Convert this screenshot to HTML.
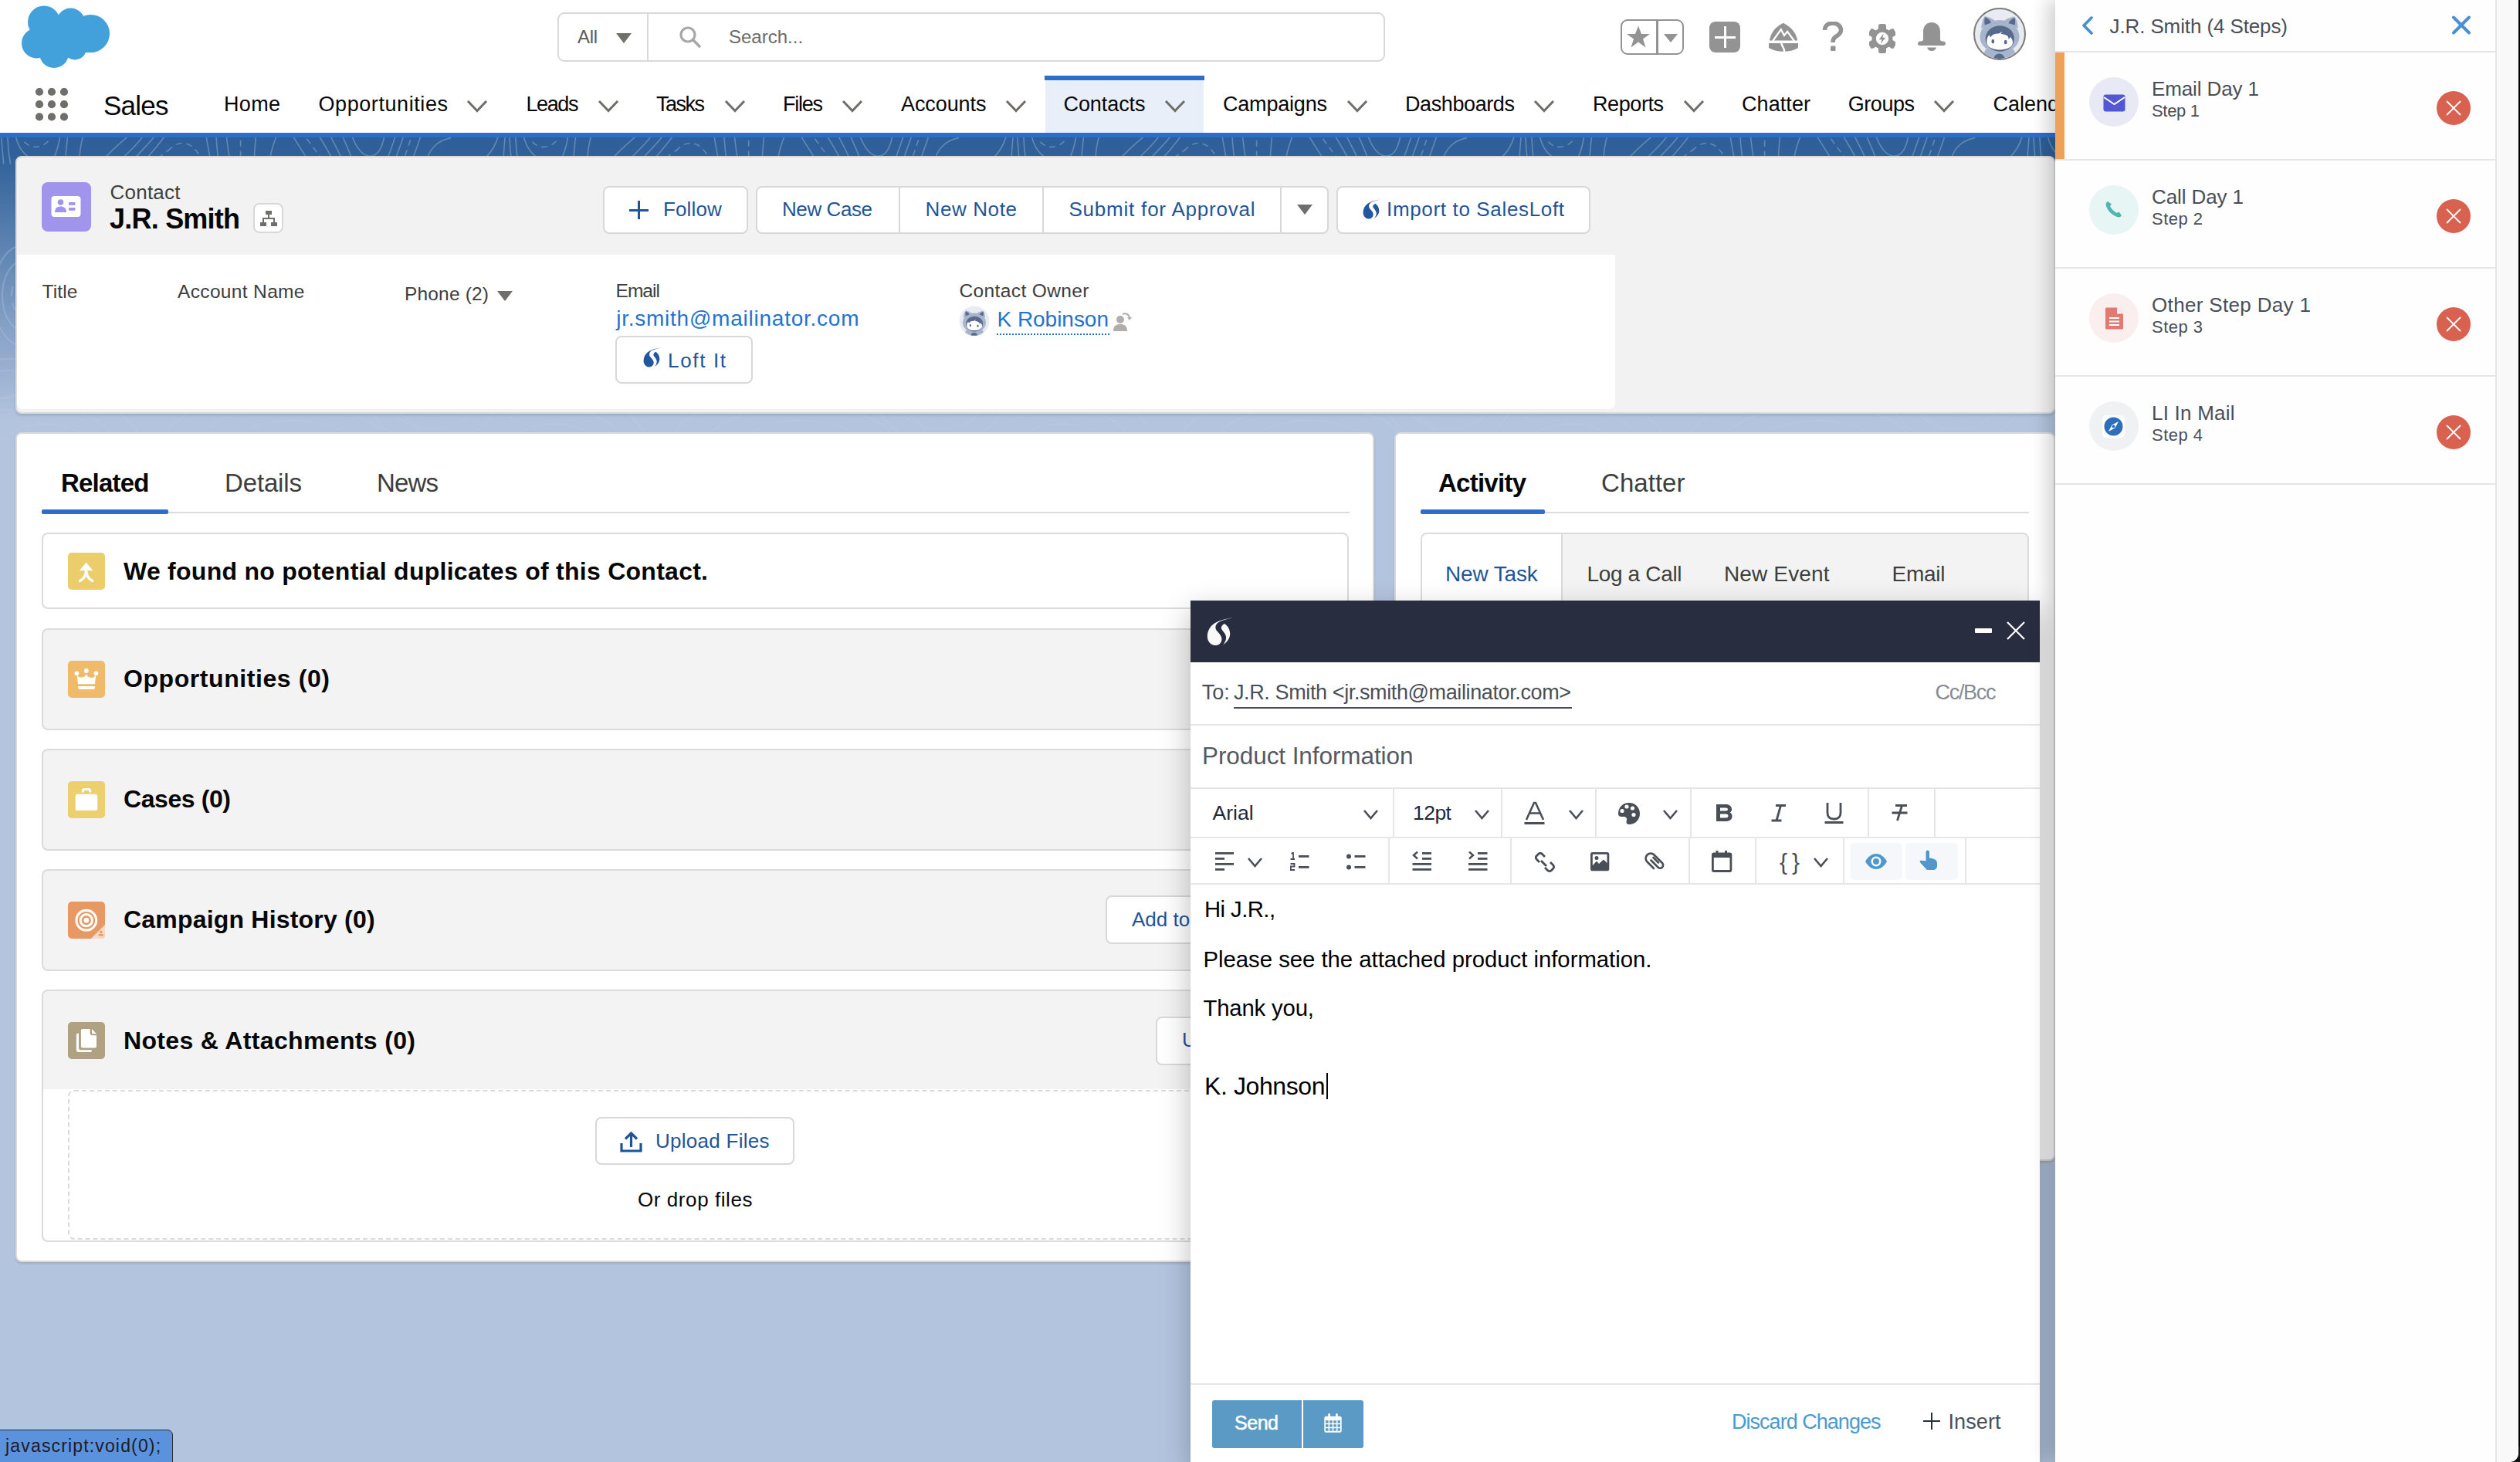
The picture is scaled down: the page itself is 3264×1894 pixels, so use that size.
<!DOCTYPE html>
<html><head><meta charset="utf-8"><title>Contact J.R. Smith</title>
<style>
*{margin:0;padding:0;box-sizing:border-box}
html,body{width:3264px;height:1894px;overflow:hidden;background:#b3c4de;font-family:"Liberation Sans",sans-serif}
body>div,body>svg{position:absolute}
.t{white-space:nowrap}
</style></head>
<body>
<div style="left:0px;top:178px;width:3264px;height:520px;background:linear-gradient(to bottom,#2e5f98 0px,#2f6099 20px,#b3c4de 368px)"></div>
<svg style="left:0;top:178px;opacity:.25" width="2662" height="420" viewBox="0 0 2662 420"><defs><pattern id="topo" x="0" y="0" width="658" height="600" patternUnits="userSpaceOnUse"><g transform="scale(0.26190) translate(0,-7.6)"><path d="M5,-30 C8,30 12,80 18,140" fill="none" stroke="#ffffff" stroke-width="6.2"/><path d="M38,-30 C36,40 42,90 52,140" fill="none" stroke="#ffffff" stroke-width="6.2"/><path d="M72,-30 C80,40 110,95 170,120" fill="none" stroke="#ffffff" stroke-width="6.2"/><path d="M120,30 C150,60 200,70 245,20" fill="none" stroke="#ffffff" stroke-width="6.2" stroke-dasharray="30 22"/><path d="M300,-30 C295,40 280,90 250,140" fill="none" stroke="#ffffff" stroke-width="6.2"/><path d="M338,-30 C330,40 325,90 322,140" fill="none" stroke="#ffffff" stroke-width="6.2"/><path d="M420,-30 C400,30 392,80 392,140" fill="none" stroke="#ffffff" stroke-width="6.2"/><path d="M500,130 C560,60 600,30 660,-20" fill="none" stroke="#ffffff" stroke-width="6.2"/><path d="M590,130 C640,70 690,40 720,-20" fill="none" stroke="#ffffff" stroke-width="6.2"/><path d="M650,130 C700,70 740,40 780,-20" fill="none" stroke="#ffffff" stroke-width="6.2"/><path d="M710,130 C760,70 790,40 830,-20" fill="none" stroke="#ffffff" stroke-width="6.2"/><path d="M780,110 C800,95 820,80 840,65" fill="none" stroke="#ffffff" stroke-width="6.2" stroke-dasharray="30 22"/><path d="M830,75 C880,20 940,20 985,95" fill="none" stroke="#ffffff" stroke-width="6.2" stroke-dasharray="30 22"/><path d="M1015,-30 C1025,40 1035,90 1045,140" fill="none" stroke="#ffffff" stroke-width="6.2"/><path d="M1068,-30 C1070,40 1075,90 1085,140" fill="none" stroke="#ffffff" stroke-width="6.2"/><path d="M1118,-30 C1122,40 1130,90 1142,140" fill="none" stroke="#ffffff" stroke-width="6.2"/><path d="M1190,-30 L1190,140" fill="none" stroke="#ffffff" stroke-width="6.2" stroke-dasharray="30 22"/><path d="M1268,-30 C1262,40 1258,90 1256,140" fill="none" stroke="#ffffff" stroke-width="6.2"/><path d="M1380,-30 C1350,40 1335,90 1332,140" fill="none" stroke="#ffffff" stroke-width="6.2"/><path d="M1430,-30 C1470,40 1500,80 1535,140" fill="none" stroke="#ffffff" stroke-width="6.2"/><path d="M1490,-30 C1530,40 1570,80 1610,140" fill="none" stroke="#ffffff" stroke-width="6.2" stroke-dasharray="30 22"/><path d="M1560,-30 C1600,40 1630,80 1655,140" fill="none" stroke="#ffffff" stroke-width="6.2"/><path d="M1620,-30 C1650,40 1680,80 1700,140" fill="none" stroke="#ffffff" stroke-width="6.2"/><path d="M1680,-30 C1710,40 1730,80 1750,140" fill="none" stroke="#ffffff" stroke-width="6.2"/><path d="M1730,-30 C1760,70 1800,100 1830,100 C1870,100 1895,60 1905,-30" fill="none" stroke="#ffffff" stroke-width="6.2"/><path d="M1965,-30 C1945,40 1925,90 1905,140" fill="none" stroke="#ffffff" stroke-width="6.2"/><path d="M2005,-30 C1985,40 1965,90 1945,140" fill="none" stroke="#ffffff" stroke-width="6.2"/><path d="M2045,-30 C2025,40 2005,90 1990,140" fill="none" stroke="#ffffff" stroke-width="6.2" stroke-dasharray="30 22"/><path d="M2090,-30 C2070,40 2050,90 2030,140" fill="none" stroke="#ffffff" stroke-width="6.2"/><path d="M2230,10 C2170,20 2120,60 2105,140" fill="none" stroke="#ffffff" stroke-width="6.2"/><path d="M2470,-30 C2460,40 2430,80 2390,120" fill="none" stroke="#ffffff" stroke-width="6.2"/><path d="M2500,-30 C2495,40 2490,90 2488,140" fill="none" stroke="#ffffff" stroke-width="6.2"/></g><ellipse cx="60" cy="420" rx="40" ry="28" fill="none" stroke="#ffffff" stroke-width="2"/><ellipse cx="60" cy="420" rx="70" ry="49" fill="none" stroke="#ffffff" stroke-width="2"/><ellipse cx="60" cy="420" rx="100" ry="70" fill="none" stroke="#ffffff" stroke-width="2"/><ellipse cx="60" cy="420" rx="130" ry="91" fill="none" stroke="#ffffff" stroke-width="2"/><ellipse cx="380" cy="400" rx="78" ry="33" fill="none" stroke="#ffffff" stroke-width="2"/><ellipse cx="380" cy="400" rx="124" ry="52" fill="none" stroke="#ffffff" stroke-width="2"/><ellipse cx="380" cy="400" rx="169" ry="72" fill="none" stroke="#ffffff" stroke-width="2"/><ellipse cx="30" cy="205" rx="15" ry="25" fill="none" stroke="#ffffff" stroke-width="2" stroke-dasharray="12 9"/><ellipse cx="30" cy="205" rx="27" ry="45" fill="none" stroke="#ffffff" stroke-width="2"/><ellipse cx="30" cy="205" rx="39" ry="65" fill="none" stroke="#ffffff" stroke-width="2"/><ellipse cx="10" cy="320" rx="30" ry="18" fill="none" stroke="#ffffff" stroke-width="2"/><ellipse cx="10" cy="320" rx="55" ry="33" fill="none" stroke="#ffffff" stroke-width="2"/><ellipse cx="560" cy="330" rx="35" ry="28" fill="none" stroke="#ffffff" stroke-width="2"/><ellipse cx="560" cy="330" rx="60" ry="48" fill="none" stroke="#ffffff" stroke-width="2"/><ellipse cx="560" cy="330" rx="85" ry="68" fill="none" stroke="#ffffff" stroke-width="2"/></pattern><linearGradient id="tfade" x1="0" y1="0" x2="0" y2="1"><stop offset="0" stop-color="#fff"/><stop offset=".55" stop-color="#fff" stop-opacity=".6"/><stop offset="1" stop-color="#fff" stop-opacity="0"/></linearGradient><mask id="tmask"><rect width="2662" height="420" fill="url(#tfade)"/></mask></defs><rect width="2662" height="420" fill="url(#topo)" mask="url(#tmask)"/></svg>
<div style="left:0px;top:0px;width:3264px;height:172px;background:#fff"></div>
<div style="left:0px;top:172px;width:3264px;height:6px;background:#2b6fcc"></div>
<svg style="left:26px;top:6px;" width="120" height="86" viewBox="0 0 120 86"><g fill="#42a0da"><circle cx="31" cy="22.5" r="21"/><circle cx="65.5" cy="23" r="18.5"/><circle cx="91.5" cy="37.5" r="24.5"/><circle cx="21.5" cy="50" r="19.5"/><circle cx="44" cy="63" r="19"/><circle cx="71" cy="56.5" r="15"/><rect x="22" y="26" width="74" height="36"/></g></svg>
<div style="left:722px;top:16px;width:1072px;height:64px;border:2px solid #d9d9d9;border-radius:9px;background:#fff"></div>
<div style="left:838px;top:18px;width:2px;height:60px;background:#d9d9d9"></div>
<div class="t" style="left:748.00px;top:35.68px;font-size:24px;line-height:24px;color:#5c5c5c;letter-spacing:-0.350px;">All</div>
<svg style="left:798px;top:43px;" width="20" height="13" viewBox="0 0 20 13"><polygon points="0,0 20,0 10.0,13" fill="#706e6b"/></svg>
<svg style="left:878px;top:32px;" width="32" height="32" viewBox="0 0 32 32"><circle cx="13" cy="13" r="9" fill="none" stroke="#a8a8a8" stroke-width="3.2"/><line x1="19.5" y1="19.5" x2="28" y2="28" stroke="#a8a8a8" stroke-width="3.6" stroke-linecap="round"/></svg>
<div class="t" style="left:944.00px;top:35.68px;font-size:24px;line-height:24px;color:#6b6b6b;">Search...</div>
<div style="left:2099px;top:25px;width:82px;height:46px;border:2.5px solid #939393;border-radius:9px"></div>
<div style="left:2145px;top:26px;width:2.5px;height:44px;background:#939393"></div>
<svg style="left:2106px;top:32px;" width="32" height="32" viewBox="0 0 32 32"><polygon fill="#939393" points="16,1.5 20,12 31,12 22,18.5 25.5,29.5 16,22.5 6.5,29.5 10,18.5 1,12 12,12"/></svg>
<svg style="left:2155px;top:44px;" width="18" height="11" viewBox="0 0 18 11"><polygon points="0,0 18,0 9.0,11" fill="#939393"/></svg>
<div style="left:2214px;top:28px;width:40px;height:40px;background:#939393;border-radius:8px"></div>
<div style="left:2221px;top:46.5px;width:27px;height:3.5px;background:#fff"></div>
<div style="left:2232.8px;top:34px;width:3.5px;height:28px;background:#fff"></div>
<svg style="left:2290px;top:29px;" width="40" height="40" viewBox="0 0 40 40"><path fill="#939393" d="M19.8,0.8 C28,5 36,12 38.2,23.4 L1.9,23.4 C4,12 11,5 19.8,0.8 Z"/><path fill="#939393" d="M1,27 L39,27 L39,33 C33,36.5 27,37.7 20,37.7 C13,37.7 7,36.5 1,33 Z"/><polyline points="6.2,24 16.8,9.2 21,17 25,11.8 34,24" fill="none" stroke="#fff" stroke-width="2.3"/><path d="M17.6,26 C16.3,30 21.8,32.5 21.3,38.5" fill="none" stroke="#fff" stroke-width="2.4"/></svg>
<svg style="left:2360px;top:28px;" width="30" height="40" viewBox="0 0 30 40"><path d="M3.5,11 C3.5,5 8.5,2 14,2 C20,2 24.5,6 24.5,11 C24.5,16 20.5,17.5 17,20 C15,21.5 14,23 14,27" fill="none" stroke="#939393" stroke-width="5.5"/><rect x="11" y="31.5" width="6.5" height="6.5" rx="1" fill="#939393"/></svg>
<svg style="left:2421px;top:31px;" width="34" height="38" viewBox="0 0 34 38"><g fill="#939393"><rect x="12" y="0" width="10" height="9" rx="2.5" transform="rotate(0 17 19)"/><rect x="12" y="0" width="10" height="9" rx="2.5" transform="rotate(60 17 19)"/><rect x="12" y="0" width="10" height="9" rx="2.5" transform="rotate(120 17 19)"/><rect x="12" y="0" width="10" height="9" rx="2.5" transform="rotate(180 17 19)"/><rect x="12" y="0" width="10" height="9" rx="2.5" transform="rotate(240 17 19)"/><rect x="12" y="0" width="10" height="9" rx="2.5" transform="rotate(300 17 19)"/><circle cx="17" cy="19" r="13.5"/></g><circle cx="17" cy="19" r="8.2" fill="#fff"/><polygon fill="#939393" points="18.8,12.2 12.8,20.2 16.6,20.2 14.8,26 21.2,17.8 17.4,17.8"/></svg>
<svg style="left:2482px;top:29px;" width="40" height="40" viewBox="0 0 40 40"><path fill="#939393" d="M20,0 C27,0 31,5 31,12 L31,22 C31,24 32.5,24.5 35,24.5 C37,24.5 38,26 38,27.5 C38,29 37,30 35.5,30 L4.5,30 C3,30 2,29 2,27.5 C2,26 3,24.5 5,24.5 C7.5,24.5 9,24 9,22 L9,12 C9,5 13,0 20,0 Z"/><path fill="#939393" d="M14,32.5 L26,32.5 C25,35.5 23,37 20,37 C17,37 15,35.5 14,32.5 Z"/></svg>
<svg style="left:2556px;top:10px;" width="68" height="68" viewBox="0 0 68 68"><circle cx="34" cy="34" r="33" fill="#e8ebf0" stroke="#7b7b7b" stroke-width="2"/><clipPath id="avc"><circle cx="34" cy="34" r="32"/></clipPath><g clip-path="url(#avc)"><path d="M8,70 L16,54 L52,54 L60,70 Z" fill="#a6b4cc"/><ellipse cx="34" cy="37.5" rx="25.5" ry="21.5" fill="#a6b4cc"/><path d="M10,27 C11,19 12,14 15,11 C20,12 25,14 28,17 Z M58,27 C57,19 56,14 53,11.5 C48,12.5 43,14 40,17 Z" fill="#a6b4cc"/><path d="M14.8,22.5 C14,17 14.3,14 15.3,12.2 C18.5,13.5 21.5,16 23,19.5 Z M53.7,22.5 C54.5,17.5 54.2,14.5 53.2,13 C50,14.3 47,16.5 45.5,20 Z" fill="#586b8c"/><ellipse cx="34.3" cy="40" rx="18.6" ry="16.8" fill="#586b8c"/><path d="M17.5,45 C17.2,40 18.5,37 20.5,35.5 L22.5,38.5 C24,34.5 28,33.5 33,33.5 L37.5,31 L35.5,34 C39.5,34 43,35.5 45,37.5 L45.8,41 L47.8,38 C49.8,40 51,42 51,45 C50.5,51 43.5,54.5 34.2,54.5 C25,54.5 17.8,51 17.5,45 Z" fill="#fff"/><ellipse cx="25.3" cy="43.5" rx="1.9" ry="2.7" fill="#586b8c"/><ellipse cx="41.7" cy="44.5" rx="1.9" ry="2.7" fill="#586b8c"/><circle cx="33.5" cy="66.5" r="7" fill="#586b8c"/></g></svg>
<svg style="left:46px;top:113.5px;" width="43" height="43" viewBox="0 0 43 43"><g fill="#706e6b"><circle cx="5" cy="5.0" r="5.1"/><circle cx="5" cy="21.2" r="5.1"/><circle cx="5" cy="37.4" r="5.1"/><circle cx="21" cy="5.0" r="5.1"/><circle cx="21" cy="21.2" r="5.1"/><circle cx="21" cy="37.4" r="5.1"/><circle cx="37" cy="5.0" r="5.1"/><circle cx="37" cy="21.2" r="5.1"/><circle cx="37" cy="37.4" r="5.1"/></g></svg>
<div class="t" style="left:134.00px;top:118.97px;font-size:35px;line-height:35px;color:#080707;letter-spacing:-0.775px;">Sales</div>
<div style="left:1353px;top:98px;width:207px;height:6px;background:#2b6fcc"></div>
<div style="left:1354px;top:104px;width:205px;height:68px;background:#e8eff9"></div>
<div class="t" style="left:290.00px;top:121.64px;font-size:27px;line-height:27px;color:#080707;letter-spacing:0.333px;">Home</div>
<div class="t" style="left:412.50px;top:121.64px;font-size:27px;line-height:27px;color:#080707;letter-spacing:0.575px;">Opportunities</div>
<svg style="left:603px;top:128px;" width="30" height="18.5" viewBox="0 0 30 18.5"><polyline points="3,3 15.0,15.5 27,3" fill="none" stroke="#706e6b" stroke-width="3" stroke-linecap="butt" stroke-linejoin="miter"/></svg>
<div class="t" style="left:681.50px;top:121.64px;font-size:27px;line-height:27px;color:#080707;letter-spacing:-1.400px;">Leads</div>
<svg style="left:772.5px;top:128px;" width="30.0" height="18.5" viewBox="0 0 30.0 18.5"><polyline points="3,3 15.0,15.5 27.0,3" fill="none" stroke="#706e6b" stroke-width="3" stroke-linecap="butt" stroke-linejoin="miter"/></svg>
<div class="t" style="left:850.00px;top:121.64px;font-size:27px;line-height:27px;color:#080707;letter-spacing:-1.500px;">Tasks</div>
<svg style="left:937px;top:128px;" width="30" height="18.5" viewBox="0 0 30 18.5"><polyline points="3,3 15.0,15.5 27,3" fill="none" stroke="#706e6b" stroke-width="3" stroke-linecap="butt" stroke-linejoin="miter"/></svg>
<div class="t" style="left:1014.00px;top:121.64px;font-size:27px;line-height:27px;color:#080707;letter-spacing:-1.250px;">Files</div>
<svg style="left:1089px;top:128px;" width="30" height="18.5" viewBox="0 0 30 18.5"><polyline points="3,3 15.0,15.5 27,3" fill="none" stroke="#706e6b" stroke-width="3" stroke-linecap="butt" stroke-linejoin="miter"/></svg>
<div class="t" style="left:1167.00px;top:121.64px;font-size:27px;line-height:27px;color:#080707;letter-spacing:-0.086px;">Accounts</div>
<svg style="left:1301px;top:128px;" width="30" height="18.5" viewBox="0 0 30 18.5"><polyline points="3,3 15.0,15.5 27,3" fill="none" stroke="#706e6b" stroke-width="3" stroke-linecap="butt" stroke-linejoin="miter"/></svg>
<div class="t" style="left:1377.50px;top:121.64px;font-size:27px;line-height:27px;color:#080707;letter-spacing:-0.071px;">Contacts</div>
<svg style="left:1507px;top:128px;" width="30" height="18.5" viewBox="0 0 30 18.5"><polyline points="3,3 15.0,15.5 27,3" fill="none" stroke="#706e6b" stroke-width="3" stroke-linecap="butt" stroke-linejoin="miter"/></svg>
<div class="t" style="left:1584.00px;top:121.64px;font-size:27px;line-height:27px;color:#080707;letter-spacing:-0.200px;">Campaigns</div>
<svg style="left:1743px;top:128px;" width="30" height="18.5" viewBox="0 0 30 18.5"><polyline points="3,3 15.0,15.5 27,3" fill="none" stroke="#706e6b" stroke-width="3" stroke-linecap="butt" stroke-linejoin="miter"/></svg>
<div class="t" style="left:1820.00px;top:121.64px;font-size:27px;line-height:27px;color:#080707;letter-spacing:-0.400px;">Dashboards</div>
<svg style="left:1985px;top:128px;" width="30" height="18.5" viewBox="0 0 30 18.5"><polyline points="3,3 15.0,15.5 27,3" fill="none" stroke="#706e6b" stroke-width="3" stroke-linecap="butt" stroke-linejoin="miter"/></svg>
<div class="t" style="left:2063.00px;top:121.64px;font-size:27px;line-height:27px;color:#080707;letter-spacing:-0.417px;">Reports</div>
<svg style="left:2179px;top:128px;" width="30" height="18.5" viewBox="0 0 30 18.5"><polyline points="3,3 15.0,15.5 27,3" fill="none" stroke="#706e6b" stroke-width="3" stroke-linecap="butt" stroke-linejoin="miter"/></svg>
<div class="t" style="left:2256.00px;top:121.64px;font-size:27px;line-height:27px;color:#080707;letter-spacing:0.083px;">Chatter</div>
<div class="t" style="left:2393.70px;top:121.64px;font-size:27px;line-height:27px;color:#080707;letter-spacing:-0.440px;">Groups</div>
<svg style="left:2503px;top:128px;" width="30" height="18.5" viewBox="0 0 30 18.5"><polyline points="3,3 15.0,15.5 27,3" fill="none" stroke="#706e6b" stroke-width="3" stroke-linecap="butt" stroke-linejoin="miter"/></svg>
<div class="t" style="left:2581.50px;top:121.64px;font-size:27px;line-height:27px;color:#080707;">Calendar</div>
<div style="left:20px;top:202px;width:2642px;height:334px;background:#f2f2f2;border:2px solid #dddbda;border-radius:8px;box-shadow:0 2px 3px rgba(0,0,0,.12)"></div>
<div style="left:22px;top:330px;width:2070px;height:200px;background:#fff;border-radius:0 0 8px 8px"></div>
<div style="left:54px;top:236px;width:64px;height:64px;background:#a094ed;border-radius:8px"></div>
<svg style="left:66px;top:254px;" width="40" height="28" viewBox="0 0 40 28"><rect x="0.5" y="0" width="38" height="27" rx="4" fill="#fff"/><circle cx="12.5" cy="8" r="3.8" fill="#a094ed"/><path d="M5,21 C5,15.5 8,13.5 12.5,13.5 C17,13.5 20,15.5 20,21 Z" fill="#a094ed"/><rect x="23" y="8" width="8.5" height="3.8" rx="1" fill="#a094ed"/><rect x="23" y="15" width="8.5" height="3.8" rx="1" fill="#a094ed"/></svg>
<div class="t" style="left:142.50px;top:235.99px;font-size:26px;line-height:26px;color:#3e3e3c;letter-spacing:0.233px;">Contact</div>
<div class="t" style="left:142.00px;top:265.53px;font-size:36px;line-height:36px;color:#080707;font-weight:700;letter-spacing:-0.778px;">J.R. Smith</div>
<div style="left:328px;top:263px;width:39px;height:39px;background:#fff;border:2px solid #d8d8d8;border-radius:8px"></div>
<svg style="left:337px;top:273px;" width="22" height="20" viewBox="0 0 22 20"><g fill="#706e6b"><rect x="7" y="0" width="8" height="5"/><rect x="0" y="15" width="8" height="5"/><rect x="14" y="15" width="8" height="5"/><rect x="10" y="5" width="2" height="5"/><rect x="3" y="9" width="16" height="2"/><rect x="3" y="9" width="2" height="6"/><rect x="17" y="9" width="2" height="6"/></g></svg>
<div style="left:781px;top:241px;width:188px;height:62px;background:#fff;border:2px solid #d8d8d8;border-radius:8px"></div>
<div style="left:815px;top:270.5px;width:25px;height:3px;background:#1f5497"></div>
<div style="left:826px;top:260px;width:3px;height:24px;background:#1f5497"></div>
<div class="t" style="left:859.00px;top:257.99px;font-size:26px;line-height:26px;color:#1f5497;letter-spacing:0.140px;">Follow</div>
<div style="left:979px;top:241px;width:742px;height:62px;background:#fff;border:2px solid #d8d8d8;border-radius:8px"></div>
<div style="left:1164px;top:243px;width:2px;height:58px;background:#d8d8d8"></div>
<div style="left:1350px;top:243px;width:2px;height:58px;background:#d8d8d8"></div>
<div style="left:1658px;top:243px;width:2px;height:58px;background:#d8d8d8"></div>
<div class="t" style="left:1013.00px;top:257.99px;font-size:26px;line-height:26px;color:#1f5497;letter-spacing:-0.414px;">New Case</div>
<div class="t" style="left:1198.50px;top:257.99px;font-size:26px;line-height:26px;color:#1f5497;letter-spacing:0.614px;">New Note</div>
<div class="t" style="left:1384.50px;top:257.99px;font-size:26px;line-height:26px;color:#1f5497;letter-spacing:0.783px;">Submit for Approval</div>
<svg style="left:1680px;top:265px;" width="20" height="13" viewBox="0 0 20 13"><polygon points="0,0 20,0 10.0,13" fill="#706e6b"/></svg>
<div style="left:1731px;top:241px;width:329px;height:62px;background:#fff;border:2px solid #d8d8d8;border-radius:8px"></div>
<svg style="left:1765px;top:258px;" width="24" height="26" viewBox="0 0 34 36.5"><g fill="#23579d"><path d="M33.7,0.4 C25,1 14,4 8,9 C2,14 -0.5,22 1.5,29 C3.5,34 8,36.5 12,36 C17,35.5 20,31 19.3,26.6 C18.8,23 15,19.5 12.5,16.5 C10.5,13.5 11,9 15.5,6 C19.5,3.5 25.5,1.8 33.7,0.4 Z"/><path d="M23.2,8 C25,9.5 30,13 30.2,21 C30.3,27 26,32 21.3,35.2 C24.5,31 26,27 24.5,23 C23.5,20 20,17 19,14.5 C18.3,12 20.5,9 23.2,8 Z"/></g></svg>
<div class="t" style="left:1796.00px;top:257.99px;font-size:26px;line-height:26px;color:#1f5497;letter-spacing:0.656px;">Import to SalesLoft</div>
<div class="t" style="left:54.50px;top:365.66px;font-size:24.5px;line-height:24.5px;color:#3e3e3c;letter-spacing:0.150px;">Title</div>
<div class="t" style="left:230.00px;top:365.66px;font-size:24.5px;line-height:24.5px;color:#3e3e3c;letter-spacing:0.345px;">Account Name</div>
<div class="t" style="left:524.00px;top:369.26px;font-size:24.5px;line-height:24.5px;color:#3e3e3c;letter-spacing:0.175px;">Phone (2)</div>
<svg style="left:644px;top:377px;" width="20" height="13" viewBox="0 0 20 13"><polygon points="0,0 20,0 10.0,13" fill="#706e6b"/></svg>
<div class="t" style="left:797.50px;top:365.46px;font-size:24.5px;line-height:24.5px;color:#3e3e3c;letter-spacing:-0.950px;">Email</div>
<div class="t" style="left:798.20px;top:398.50px;font-size:28px;line-height:28px;color:#2372cf;letter-spacing:0.759px;">jr.smith@mailinator.com</div>
<div style="left:797px;top:435px;width:178px;height:62px;background:#fff;border:2px solid #d8d8d8;border-radius:8px"></div>
<svg style="left:833px;top:450px;" width="24" height="26" viewBox="0 0 34 36.5"><g fill="#23579d"><path d="M33.7,0.4 C25,1 14,4 8,9 C2,14 -0.5,22 1.5,29 C3.5,34 8,36.5 12,36 C17,35.5 20,31 19.3,26.6 C18.8,23 15,19.5 12.5,16.5 C10.5,13.5 11,9 15.5,6 C19.5,3.5 25.5,1.8 33.7,0.4 Z"/><path d="M23.2,8 C25,9.5 30,13 30.2,21 C30.3,27 26,32 21.3,35.2 C24.5,31 26,27 24.5,23 C23.5,20 20,17 19,14.5 C18.3,12 20.5,9 23.2,8 Z"/></g></svg>
<div class="t" style="left:865.00px;top:453.99px;font-size:26px;line-height:26px;color:#1f5497;letter-spacing:1.667px;">Loft It</div>
<div class="t" style="left:1242.50px;top:365.46px;font-size:24.5px;line-height:24.5px;color:#3e3e3c;letter-spacing:0.383px;">Contact Owner</div>
<svg style="left:1242px;top:396px;" width="40" height="40" viewBox="0 0 68 68"><circle cx="34" cy="34" r="33" fill="#e8ebf0" stroke="none"/><clipPath id="avc2"><circle cx="34" cy="34" r="32"/></clipPath><g clip-path="url(#avc2)"><path d="M8,70 L16,54 L52,54 L60,70 Z" fill="#a6b4cc"/><ellipse cx="34" cy="37.5" rx="25.5" ry="21.5" fill="#a6b4cc"/><path d="M10,27 C11,19 12,14 15,11 C20,12 25,14 28,17 Z M58,27 C57,19 56,14 53,11.5 C48,12.5 43,14 40,17 Z" fill="#a6b4cc"/><path d="M14.8,22.5 C14,17 14.3,14 15.3,12.2 C18.5,13.5 21.5,16 23,19.5 Z M53.7,22.5 C54.5,17.5 54.2,14.5 53.2,13 C50,14.3 47,16.5 45.5,20 Z" fill="#586b8c"/><ellipse cx="34.3" cy="40" rx="18.6" ry="16.8" fill="#586b8c"/><path d="M17.5,45 C17.2,40 18.5,37 20.5,35.5 L22.5,38.5 C24,34.5 28,33.5 33,33.5 L37.5,31 L35.5,34 C39.5,34 43,35.5 45,37.5 L45.8,41 L47.8,38 C49.8,40 51,42 51,45 C50.5,51 43.5,54.5 34.2,54.5 C25,54.5 17.8,51 17.5,45 Z" fill="#fff"/><ellipse cx="25.3" cy="43.5" rx="1.9" ry="2.7" fill="#586b8c"/><ellipse cx="41.7" cy="44.5" rx="1.9" ry="2.7" fill="#586b8c"/><circle cx="33.5" cy="66.5" r="7" fill="#586b8c"/></g></svg>
<div class="t" style="left:1291.50px;top:400.00px;font-size:28px;line-height:28px;color:#2372cf;letter-spacing:-0.033px;">K Robinson</div>
<div style="left:1291px;top:431.5px;width:146px;height:2px;background:repeating-linear-gradient(to right,#2372cf 0 2px,transparent 2px 4px)"></div>
<svg style="left:1441px;top:402px;" width="26" height="28" viewBox="0 0 26 28"><g fill="#b0adab"><circle cx="10" cy="12" r="5"/><path d="M1,27 C1,20 5,18 10,18 C15,18 19,20 19,27 Z"/></g><path d="M13,5 C17,3 21,5 22,9" fill="none" stroke="#b0adab" stroke-width="2"/><polygon points="19,9 25,9 22,13" fill="#b0adab"/></svg>
<div style="left:20px;top:560px;width:1760px;height:1075px;background:#fff;border:2px solid #dddbda;border-radius:8px;box-shadow:0 2px 3px rgba(0,0,0,.12)"></div>
<div style="left:1806px;top:560px;width:856px;height:944px;background:#fff;border:2px solid #dddbda;border-radius:8px;box-shadow:0 2px 3px rgba(0,0,0,.12)"></div>
<div class="t" style="left:79.00px;top:608.67px;font-size:33px;line-height:33px;color:#080707;font-weight:700;letter-spacing:-0.783px;">Related</div>
<div class="t" style="left:291.00px;top:608.67px;font-size:33px;line-height:33px;color:#3e3e3c;letter-spacing:-0.150px;">Details</div>
<div class="t" style="left:488.00px;top:608.67px;font-size:33px;line-height:33px;color:#3e3e3c;letter-spacing:-0.833px;">News</div>
<div style="left:54px;top:663px;width:1694px;height:2px;background:#dddbda"></div>
<div style="left:54px;top:660px;width:164px;height:6px;background:#2b6fcc;border-radius:2px"></div>
<div style="left:54px;top:690px;width:1693px;height:99px;background:#fff;border:2px solid #dddbda;border-radius:8px"></div>
<div style="left:88px;top:716px;width:48px;height:48px;background:#ebcd6b;border-radius:5px"></div>
<svg style="left:88px;top:716px;" width="48" height="48" viewBox="0 0 48 48"><polygon points="23.6,12.5 32.3,23.2 14.9,23.2" fill="#fff"/><path d="M23.6,22 C23.6,29 21.5,33.5 15.5,36.5 M23.6,22 C23.6,29 25.7,33.5 31.7,36.5" fill="none" stroke="#fff" stroke-width="3.4" stroke-linecap="round"/></svg>
<div class="t" style="left:160.00px;top:724.11px;font-size:32px;line-height:32px;color:#080707;font-weight:700;letter-spacing:0.265px;">We found no potential duplicates of this Contact.</div>
<div style="left:54px;top:814px;width:1693px;height:132px;background:#f3f3f3;border:2px solid #dddbda;border-radius:8px"></div>
<div style="left:88px;top:856.0px;width:48px;height:48px;background:#f0ba6b;border-radius:5px"></div>
<svg style="left:88px;top:856.0px;" width="48" height="48" viewBox="0 0 48 48"><g fill="#fff"><path d="M11.6,18.2 A6.6,6.6 0 0 0 23.8,16.5 A6.6,6.6 0 0 0 36.2,18.2 L34.9,30.2 L13.1,30.2 Z"/><path d="M13.1,33 L35.1,33 L35.1,34.5 C35.1,36 34,37 32.5,37 L15.7,37 C14.2,37 13.1,36 13.1,34.5 Z"/><circle cx="11.4" cy="16.3" r="2.9"/><circle cx="23.8" cy="13" r="2.9"/><circle cx="36.5" cy="16.3" r="2.9"/></g></svg>
<div class="t" style="left:160.00px;top:863.41px;font-size:32px;line-height:32px;color:#080707;font-weight:700;letter-spacing:0.575px;">Opportunities (0)</div>
<div style="left:54px;top:970px;width:1693px;height:132px;background:#f3f3f3;border:2px solid #dddbda;border-radius:8px"></div>
<div style="left:88px;top:1012.0px;width:48px;height:48px;background:#ecd06f;border-radius:5px"></div>
<svg style="left:88px;top:1012.0px;" width="48" height="48" viewBox="0 0 48 48"><g fill="#fff"><rect x="9.7" y="16.7" width="28.5" height="21.3" rx="2.6"/><path d="M19.4,14.5 L19.4,12.5 C19.4,11 20.2,10.5 21.5,10.5 L26.5,10.5 C27.8,10.5 28.6,11 28.6,12.5 L28.6,14.5" fill="none" stroke="#fff" stroke-width="3"/></g></svg>
<div class="t" style="left:160.00px;top:1019.41px;font-size:32px;line-height:32px;color:#080707;font-weight:700;letter-spacing:-0.413px;">Cases (0)</div>
<div style="left:54px;top:1126px;width:1693px;height:132px;background:#f3f3f3;border:2px solid #dddbda;border-radius:8px"></div>
<div style="left:88px;top:1168.0px;width:48px;height:48px;background:#e89963;border-radius:5px"></div>
<svg style="left:88px;top:1168.0px;" width="48" height="48" viewBox="0 0 48 48"><g fill="none" stroke="#fff"><circle cx="23.8" cy="24.2" r="12.85" stroke-width="3.1"/><circle cx="23.8" cy="24.2" r="7.6" stroke-width="3"/></g><circle cx="23.8" cy="24.2" r="3.35" fill="#fff"/><path d="M29.8,48 L48,29.9 L48,42 C48,45.5 45.5,48 42,48 Z" fill="#f5dbc4"/><circle cx="42.8" cy="39.5" r="1.8" fill="#e89963"/><path d="M39.3,44.5 C39.3,42.5 41,41.8 42.8,41.8 C44.6,41.8 46.3,42.5 46.3,44.5 Z" fill="#e89963"/></svg>
<div class="t" style="left:160.00px;top:1175.41px;font-size:32px;line-height:32px;color:#080707;font-weight:700;letter-spacing:0.195px;">Campaign History (0)</div>
<div style="left:54px;top:1282px;width:1693px;height:327px;background:#fff;border:2px solid #dddbda;border-radius:8px"></div>
<div style="left:56px;top:1284px;width:1689px;height:127px;background:#f3f3f3;border-radius:6px 6px 0 0"></div>
<div style="left:88px;top:1324px;width:48px;height:48px;background:#afa181;border-radius:5px"></div>
<svg style="left:88px;top:1324px;" width="48" height="48" viewBox="0 0 48 48"><path d="M19,9 L28.6,9 L28.6,14.5 C28.6,16 29.8,17.3 31.3,17.3 L37,17.3 L37,31.4 C37,32.5 36,33.4 35,33.4 L19,33.4 C17.8,33.4 16.9,32.5 16.9,31.4 L16.9,11 C16.9,9.9 17.8,9 19,9 Z" fill="#fff"/><path d="M31,9 L37,15.2 L31,15.2 Z" fill="#fff"/><path d="M10.9,17 C10.9,15.5 12,14.5 14,14.5 L14,33.5 C14,35 15.2,36.2 16.7,36.2 L31,36.2 L31,37 C31,38.2 30.1,39.1 29,39.1 L13.4,39.1 C12,39.1 10.9,38 10.9,36.6 Z" fill="#fff"/></svg>
<div class="t" style="left:160.00px;top:1331.91px;font-size:32px;line-height:32px;color:#080707;font-weight:700;letter-spacing:0.345px;">Notes &amp; Attachments (0)</div>
<div style="left:88px;top:1412px;width:1624px;height:194px;border:2px dashed #dddbda;border-radius:8px;background:#fff"></div>
<div style="left:771px;top:1447px;width:258px;height:62px;background:#fff;border:2px solid #d8d8d8;border-radius:8px"></div>
<svg style="left:803px;top:1464px;" width="30" height="30" viewBox="0 0 30 30"><g fill="none" stroke="#1f5497" stroke-width="3.2"><path d="M14.5,22 L14.5,5 M7,11.5 L14.5,4 L22,11.5"/><path d="M2,17 L2,27 L27,27 L27,17"/></g></svg>
<div class="t" style="left:849.00px;top:1464.99px;font-size:26px;line-height:26px;color:#1f5497;letter-spacing:0.273px;">Upload Files</div>
<div class="t" style="left:826.00px;top:1540.99px;font-size:26px;line-height:26px;color:#080707;letter-spacing:0.575px;">Or drop files</div>
<div style="left:1432px;top:1160px;width:160px;height:63px;background:#fff;border:2px solid #d8d8d8;border-radius:8px"></div>
<div class="t" style="left:1466.00px;top:1177.99px;font-size:26px;line-height:26px;color:#1f5497;">Add to Campaign</div>
<div style="left:1496.5px;top:1316.5px;width:140px;height:63px;background:#fff;border:2px solid #d8d8d8;border-radius:8px"></div>
<div class="t" style="left:1531.00px;top:1333.99px;font-size:26px;line-height:26px;color:#1f5497;">Upload Files</div>
<div class="t" style="left:1863.00px;top:608.67px;font-size:33px;line-height:33px;color:#080707;font-weight:700;letter-spacing:-0.743px;">Activity</div>
<div class="t" style="left:2074.00px;top:608.67px;font-size:33px;line-height:33px;color:#3e3e3c;letter-spacing:0.050px;">Chatter</div>
<div style="left:1840px;top:663px;width:788px;height:2px;background:#dddbda"></div>
<div style="left:1840px;top:660px;width:161px;height:6px;background:#2b6fcc;border-radius:2px"></div>
<div style="left:1840px;top:690px;width:788px;height:200px;background:#f3f3f3;border:2px solid #dddbda;border-radius:8px"></div>
<div style="left:1842px;top:692px;width:182px;height:198px;background:#fff;border-right:2px solid #dddbda;border-radius:6px 0 0 0"></div>
<div class="t" style="left:1872.00px;top:730.20px;font-size:28px;line-height:28px;color:#1f5497;letter-spacing:-0.143px;">New Task</div>
<div class="t" style="left:2055.50px;top:730.20px;font-size:28px;line-height:28px;color:#3e3e3c;letter-spacing:-0.344px;">Log a Call</div>
<div class="t" style="left:2233.00px;top:730.20px;font-size:28px;line-height:28px;color:#3e3e3c;letter-spacing:0.137px;">New Event</div>
<div class="t" style="left:2450.50px;top:730.20px;font-size:28px;line-height:28px;color:#3e3e3c;letter-spacing:-0.250px;">Email</div>
<div style="left:1542px;top:778px;width:1100px;height:1116px;background:#fff;box-shadow:0 14px 36px rgba(0,0,0,.27)"></div>
<div style="left:1542px;top:778px;width:1100px;height:80px;background:#282d3f"></div>
<svg style="left:1562.5px;top:799.5px;" width="34" height="36.5" viewBox="0 0 34 36.5"><g fill="#f9f9f9"><path d="M33.7,0.4 C25,1 14,4 8,9 C2,14 -0.5,22 1.5,29 C3.5,34 8,36.5 12,36 C17,35.5 20,31 19.3,26.6 C18.8,23 15,19.5 12.5,16.5 C10.5,13.5 11,9 15.5,6 C19.5,3.5 25.5,1.8 33.7,0.4 Z"/><path d="M23.2,8 C25,9.5 30,13 30.2,21 C30.3,27 26,32 21.3,35.2 C24.5,31 26,27 24.5,23 C23.5,20 20,17 19,14.5 C18.3,12 20.5,9 23.2,8 Z"/></g></svg>
<div style="left:2557.5px;top:814px;width:22.5px;height:6px;background:#fff;border-radius:1px"></div>
<svg style="left:2597px;top:803px;" width="28" height="28" viewBox="0 0 28 28"><path d="M3,3 L25,25 M25,3 L3,25" stroke="#fff" stroke-width="2.2"/></svg>
<div class="t" style="left:1556.70px;top:884.14px;font-size:27px;line-height:27px;color:#4a4f57;">To:</div>
<div class="t" style="left:1598.00px;top:884.14px;font-size:27px;line-height:27px;color:#4a4f57;letter-spacing:-0.386px;">J.R. Smith &lt;jr.smith@mailinator.com&gt;</div>
<div style="left:1598px;top:915.5px;width:437.5px;height:2.2px;background:#4a4f57"></div>
<div class="t" style="left:2506.50px;top:884.14px;font-size:27px;line-height:27px;color:#868b93;letter-spacing:-1.300px;">Cc/Bcc</div>
<div style="left:1542px;top:937.5px;width:1100px;height:2px;background:#e6e6e6"></div>
<div class="t" style="left:1557.00px;top:964.34px;font-size:31.5px;line-height:31.5px;color:#555a62;letter-spacing:-0.078px;">Product Information</div>
<div style="left:1542px;top:1020px;width:1100px;height:2px;background:#e6e6e6"></div>
<div style="left:1542px;top:1083.5px;width:1100px;height:2px;background:#e6e6e6"></div>
<div style="left:1542px;top:1143.5px;width:1100px;height:2px;background:#e6e6e6"></div>
<div style="left:1804px;top:1022px;width:2px;height:62px;background:#e6e6e6"></div>
<div style="left:1944px;top:1022px;width:2px;height:62px;background:#e6e6e6"></div>
<div style="left:2065.5px;top:1022px;width:2px;height:62px;background:#e6e6e6"></div>
<div style="left:2188.5px;top:1022px;width:2px;height:62px;background:#e6e6e6"></div>
<div style="left:2418.5px;top:1022px;width:2px;height:62px;background:#e6e6e6"></div>
<div style="left:2504.5px;top:1022px;width:2px;height:62px;background:#e6e6e6"></div>
<div style="left:1798px;top:1085px;width:2px;height:59px;background:#e6e6e6"></div>
<div style="left:1956px;top:1085px;width:2px;height:59px;background:#e6e6e6"></div>
<div style="left:2186.5px;top:1085px;width:2px;height:59px;background:#e6e6e6"></div>
<div style="left:2272.5px;top:1085px;width:2px;height:59px;background:#e6e6e6"></div>
<div style="left:2386.5px;top:1085px;width:2px;height:59px;background:#e6e6e6"></div>
<div style="left:2544.5px;top:1085px;width:2px;height:59px;background:#e6e6e6"></div>
<div class="t" style="left:1570.50px;top:1040.07px;font-size:26.5px;line-height:26.5px;color:#1e2a3b;">Arial</div>
<svg style="left:1764px;top:1046.5px;" width="23" height="16.0" viewBox="0 0 23 16.0"><polyline points="3,3 11.5,13.0 20,3" fill="none" stroke="#4a4f57" stroke-width="2.6" stroke-linecap="butt" stroke-linejoin="miter"/></svg>
<div class="t" style="left:1830.00px;top:1040.07px;font-size:26.5px;line-height:26.5px;color:#1e2a3b;letter-spacing:-0.533px;">12pt</div>
<svg style="left:1908px;top:1046.5px;" width="23" height="16.0" viewBox="0 0 23 16.0"><polyline points="3,3 11.5,13.0 20,3" fill="none" stroke="#4a4f57" stroke-width="2.6" stroke-linecap="butt" stroke-linejoin="miter"/></svg>
<svg style="left:1973px;top:1038px;" width="30" height="32" viewBox="0 0 30 32"><path d="M4,24 L14,2 L16,2 L26,24 M8.5,15.5 L21.5,15.5" fill="none" stroke="#4a4f57" stroke-width="2.6"/><rect x="1.5" y="27" width="26" height="3" fill="#4a4f57"/></svg>
<svg style="left:2030px;top:1046.5px;" width="23" height="16.0" viewBox="0 0 23 16.0"><polyline points="3,3 11.5,13.0 20,3" fill="none" stroke="#4a4f57" stroke-width="2.6" stroke-linecap="butt" stroke-linejoin="miter"/></svg>
<svg style="left:2095px;top:1039px;" width="30" height="30" viewBox="0 0 30 30"><path fill="#4a4f57" d="M15,1 C23,1 29,7 29,15 C29,23 23,29 15,29 C13,29 11.5,28 11.5,26 C11.5,24 13,22.5 11.5,20.5 C10,18.5 7,19 5,19 C2.5,19 1,17.5 1,15 C1,7 7,1 15,1 Z"/><g fill="#fff"><circle cx="6" cy="11.5" r="2.6"/><circle cx="12" cy="6" r="2.6"/><circle cx="19.5" cy="8" r="2.6"/><circle cx="21" cy="16.5" r="2.6"/></g></svg>
<svg style="left:2152px;top:1046.5px;" width="23" height="16.0" viewBox="0 0 23 16.0"><polyline points="3,3 11.5,13.0 20,3" fill="none" stroke="#4a4f57" stroke-width="2.6" stroke-linecap="butt" stroke-linejoin="miter"/></svg>
<svg style="left:2221px;top:1040px;" width="24" height="26" viewBox="0 0 24 26"><path fill="#4a4f57" fill-rule="evenodd" d="M2,2 L14,2 C19,2 22,4.5 22,8.5 C22,10.5 21,12 19.5,12.5 C21.5,13.5 22.5,15 22.5,17.5 C22.5,21.5 19.5,24 14,24 L2,24 Z M7,6.5 L7,10.5 L14.5,10.5 C16,10.5 17,9.7 17,8.5 C17,7.3 16,6.5 14.5,6.5 Z M7,14.5 L7,19.5 L14.5,19.5 C16.5,19.5 17.5,18.5 17.5,17 C17.5,15.5 16.5,14.5 14.5,14.5 Z"/></svg>
<svg style="left:2293px;top:1040px;" width="22" height="26" viewBox="0 0 22 26"><path d="M7,3.5 L20,3.5 M1.5,23 L14.5,23 M13.5,3.5 L8,23" fill="none" stroke="#4a4f57" stroke-width="2.8"/></svg>
<svg style="left:2363px;top:1038px;" width="26" height="30" viewBox="0 0 26 30"><path d="M4,2 L4,15 C4,20 7,23 12.5,23 C18,23 21,20 21,15 L21,2" fill="none" stroke="#4a4f57" stroke-width="2.8"/><rect x="0.5" y="26" width="24" height="3" fill="#4a4f57"/></svg>
<svg style="left:2450px;top:1040px;" width="24" height="26" viewBox="0 0 24 26"><path d="M5,3.5 L20,3.5 M0.5,13 L20.5,13 M13.5,3.5 L7.5,23" fill="none" stroke="#4a4f57" stroke-width="2.8"/></svg>
<svg style="left:1573.5px;top:1103.5px;" width="25" height="25" viewBox="0 0 25 25"><g fill="#4a4f57"><rect x="0" y="0" width="24" height="2.8"/><rect x="0" y="7" width="12" height="2.8"/><rect x="0" y="14" width="24" height="2.8"/><rect x="0" y="21" width="12" height="2.8"/></g></svg>
<svg style="left:1614px;top:1108.5px;" width="23" height="16.0" viewBox="0 0 23 16.0"><polyline points="3,3 11.5,13.0 20,3" fill="none" stroke="#4a4f57" stroke-width="2.6" stroke-linecap="butt" stroke-linejoin="miter"/></svg>
<svg style="left:1671px;top:1103.5px;" width="26" height="25" viewBox="0 0 26 25"><g fill="#4a4f57"><rect x="11" y="4" width="13.5" height="2.8"/><rect x="11" y="18" width="13.5" height="2.8"/></g><path d="M1.5,2 L4,0.5 L4,9 M0.5,9 L6,9" fill="none" stroke="#4a4f57" stroke-width="1.8"/><path d="M0.5,15 L5.5,15 L5.5,18.5 L0.8,18.5 L0.8,23 L6,23" fill="none" stroke="#4a4f57" stroke-width="1.8"/></svg>
<svg style="left:1743.5px;top:1103.5px;" width="26" height="25" viewBox="0 0 26 25"><g fill="#4a4f57"><circle cx="3" cy="5.5" r="3"/><circle cx="3" cy="19.5" r="3"/><rect x="10.5" y="4" width="14" height="2.8"/><rect x="10.5" y="18" width="14" height="2.8"/></g></svg>
<svg style="left:1829px;top:1103px;" width="26" height="26" viewBox="0 0 26 26"><g fill="#4a4f57"><rect x="13" y="1" width="12" height="2.8"/><rect x="13" y="8" width="12" height="2.8"/><rect x="0.5" y="15" width="24.5" height="2.8"/><rect x="0.5" y="22" width="24.5" height="2.8"/></g><path d="M7,0.5 L2,5 L7,9.5" fill="none" stroke="#4a4f57" stroke-width="2.5"/></svg>
<svg style="left:1901.5px;top:1103px;" width="26" height="26" viewBox="0 0 26 26"><g fill="#4a4f57"><rect x="12" y="1" width="12.5" height="2.8"/><rect x="12" y="8" width="12.5" height="2.8"/><rect x="0" y="15" width="24.5" height="2.8"/><rect x="0" y="22" width="24.5" height="2.8"/></g><path d="M1,0.5 L6,5 L1,9.5" fill="none" stroke="#4a4f57" stroke-width="2.5"/></svg>
<svg style="left:1987.5px;top:1103.5px;" width="26" height="26" viewBox="0 0 26 26"><g fill="none" stroke="#4a4f57" stroke-width="2.8"><path d="M6,13 L2.5,9.5 C1,8 1,6 2.5,4.5 L4.5,2.5 C6,1 8,1 9.5,2.5 L13,6"/><path d="M13,20 L16.5,23.5 C18,25 20,25 21.5,23.5 L23.5,21.5 C25,20 25,18 23.5,16.5 L20,13"/><path d="M8,11 L15,18"/></g></svg>
<svg style="left:2060px;top:1103.5px;" width="25" height="25" viewBox="0 0 25 25"><rect x="1.4" y="1.4" width="21.5" height="21.5" rx="1.5" fill="none" stroke="#4a4f57" stroke-width="2.8"/><path d="M2,22 L2,18 L8,11.5 L11,15 L17,9.5 L23,15.5 L23,22 Z" fill="#4a4f57"/><circle cx="8" cy="7.5" r="2.5" fill="#4a4f57"/></svg>
<svg style="left:2130px;top:1102px;" width="28" height="28" viewBox="0 0 28 28"><path d="M12,23 L3.5,14.5 C1,12 1,8 3.5,5.5 C6,3 10,3 12.5,5.5 L23,16 C24.5,17.5 24.5,20 23,21.5 C21.5,23 19,23 17.5,21.5 L8.5,12.5 M11.5,9 L18,15.5" fill="none" stroke="#4a4f57" stroke-width="2.6" stroke-linecap="round"/></svg>
<svg style="left:2216.5px;top:1102px;" width="27" height="28" viewBox="0 0 27 28"><rect x="1.4" y="4" width="23.5" height="22.5" rx="1.5" fill="none" stroke="#4a4f57" stroke-width="2.8"/><rect x="1" y="3" width="24.5" height="6" fill="#4a4f57"/><rect x="5.5" y="0" width="3" height="4" fill="#4a4f57"/><rect x="17" y="0" width="3" height="4" fill="#4a4f57"/></svg>
<div class="t" style="left:2305.00px;top:1101.61px;font-size:30px;line-height:30px;color:#4a4f57;letter-spacing:-1.200px;font-family:"Liberation Mono",monospace;">{ }</div>
<svg style="left:2347px;top:1108.5px;" width="23" height="16.0" viewBox="0 0 23 16.0"><polyline points="3,3 11.5,13.0 20,3" fill="none" stroke="#4a4f57" stroke-width="2.6" stroke-linecap="butt" stroke-linejoin="miter"/></svg>
<div style="left:2396.5px;top:1092px;width:67.5px;height:48px;background:#f5f7fa;border-radius:5px"></div>
<div style="left:2468px;top:1092px;width:67.5px;height:48px;background:#f5f7fa;border-radius:5px"></div>
<svg style="left:2415px;top:1105px;" width="30" height="22" viewBox="0 0 30 22"><path d="M1,11 C5,4 10,1 15,1 C20,1 25,4 29,11 C25,18 20,21 15,21 C10,21 5,18 1,11 Z" fill="#5098cb"/><circle cx="15" cy="11" r="6.5" fill="#fff"/><circle cx="15" cy="11" r="4" fill="#5098cb"/></svg>
<svg style="left:2486px;top:1101px;" width="26" height="27" viewBox="0 0 26 27"><path d="M8.5,3 C8.5,-0.5 13,-0.5 13,3 L13,10.5 C19,11 23,13 23,17 L23,20.5 C23,24 21,26 17.5,26 L12,26 C10.5,26 9.5,25.5 8.5,24.5 L1.2,16.5 C0,15 1,13.5 3,13.8 L8.5,14.5 Z" fill="#5098cb"/></svg>
<div class="t" style="left:1560.00px;top:1163.40px;font-size:29.3px;line-height:29.3px;color:#000;letter-spacing:-0.571px;">Hi J.R.,</div>
<div class="t" style="left:1558.50px;top:1227.70px;font-size:29.3px;line-height:29.3px;color:#000;letter-spacing:-0.012px;">Please see the attached product information.</div>
<div class="t" style="left:1558.50px;top:1291.00px;font-size:29.3px;line-height:29.3px;color:#000;letter-spacing:-0.167px;">Thank you,</div>
<div class="t" style="left:1560.00px;top:1391.01px;font-size:32px;line-height:32px;color:#000;letter-spacing:-0.400px;">K. Johnson</div>
<div style="left:1718px;top:1390px;width:2px;height:34px;background:#000"></div>
<div style="left:1542px;top:1791.5px;width:1100px;height:2px;background:#e6e6e6"></div>
<div style="left:1569.5px;top:1814px;width:196.5px;height:61.5px;background:#5c9ac6;border-radius:3px"></div>
<div style="left:1685.5px;top:1814px;width:2px;height:61.5px;background:#fff"></div>
<div class="t" style="left:1599.00px;top:1831.04px;font-size:25px;line-height:25px;color:#fff;letter-spacing:-0.467px;-webkit-text-stroke:0.5px #fff;">Send</div>
<svg style="left:1715px;top:1831px;" width="23" height="25" viewBox="0 0 23 25"><rect x="0.3" y="3.8" width="22.4" height="21" rx="2.2" fill="#fff"/><rect x="2.00" y="9.20" width="3.55" height="3.43" fill="#5c9ac6"/><rect x="2.00" y="14.23" width="3.55" height="3.43" fill="#5c9ac6"/><rect x="2.00" y="19.26" width="3.55" height="3.43" fill="#5c9ac6"/><rect x="7.15" y="9.20" width="3.55" height="3.43" fill="#5c9ac6"/><rect x="7.15" y="14.23" width="3.55" height="3.43" fill="#5c9ac6"/><rect x="7.15" y="19.26" width="3.55" height="3.43" fill="#5c9ac6"/><rect x="12.30" y="9.20" width="3.55" height="3.43" fill="#5c9ac6"/><rect x="12.30" y="14.23" width="3.55" height="3.43" fill="#5c9ac6"/><rect x="12.30" y="19.26" width="3.55" height="3.43" fill="#5c9ac6"/><rect x="17.45" y="9.20" width="3.55" height="3.43" fill="#5c9ac6"/><rect x="17.45" y="14.23" width="3.55" height="3.43" fill="#5c9ac6"/><rect x="17.45" y="19.26" width="3.55" height="3.43" fill="#5c9ac6"/><rect x="5.3" y="0" width="2.6" height="7" rx="1.3" fill="#fff"/><rect x="15.1" y="0" width="2.6" height="7" rx="1.3" fill="#fff"/></svg>
<div class="t" style="left:2243.00px;top:1829.14px;font-size:27px;line-height:27px;color:#4b9ad0;letter-spacing:-0.971px;">Discard Changes</div>
<div style="left:2491px;top:1839.5px;width:22px;height:2.8px;background:#2b2f36"></div>
<div style="left:2500.5px;top:1830px;width:2.8px;height:22px;background:#2b2f36"></div>
<div class="t" style="left:2523.50px;top:1829.14px;font-size:27px;line-height:27px;color:#4a4f57;letter-spacing:0.100px;">Insert</div>
<div style="left:2662px;top:0px;width:572px;height:1894px;background:#fefefe;box-shadow:-10px 0 22px rgba(0,0,0,.18)"></div>
<div style="left:3232px;top:0px;width:2px;height:1894px;background:#e5e5e5"></div>
<div style="left:3262px;top:0px;width:2px;height:1894px;background:#000"></div>
<div style="left:3244px;top:1874px;width:20px;height:20px;background:#111"></div>
<div style="left:3234px;top:0px;width:28px;height:1894px;background:#f9f9f9;border-bottom-right-radius:11px"></div>
<svg style="left:2694px;top:20px;" width="22" height="26" viewBox="0 0 22 26"><path d="M15,3 L5,13 L15,23" fill="none" stroke="#4b8fd3" stroke-width="3.8" stroke-linecap="round" stroke-linejoin="round"/></svg>
<div class="t" style="left:2732.50px;top:20.59px;font-size:26px;line-height:26px;color:#4a4f57;letter-spacing:-0.111px;">J.R. Smith (4 Steps)</div>
<svg style="left:3174px;top:19px;" width="28" height="27" viewBox="0 0 28 27"><path d="M4,3.5 L24,23.5 M24,3.5 L4,23.5" stroke="#4b8fd3" stroke-width="4" stroke-linecap="round"/></svg>
<div style="left:2662px;top:66px;width:570px;height:2px;background:#e6e6e6"></div>
<div style="left:2662px;top:206px;width:570px;height:2px;background:#e6e6e6"></div>
<div style="left:2662px;top:346px;width:570px;height:2px;background:#e6e6e6"></div>
<div style="left:2662px;top:486px;width:570px;height:2px;background:#e6e6e6"></div>
<div style="left:2662px;top:626px;width:570px;height:2px;background:#e6e6e6"></div>
<div style="left:2662px;top:68px;width:12px;height:138px;background:#eea159"></div>
<div style="left:2706px;top:100px;width:64px;height:64px;background:#e8e9f5;border-radius:50%"></div>
<div class="t" style="left:2787.00px;top:101.99px;font-size:26px;line-height:26px;color:#4a4f57;letter-spacing:-0.120px;">Email Day 1</div>
<div class="t" style="left:2787.00px;top:133.38px;font-size:22px;line-height:22px;color:#4a4f57;letter-spacing:-0.320px;">Step 1</div>
<div style="left:3156px;top:118px;width:44px;height:44px;background:#d8614f;border-radius:50%"></div>
<svg style="left:3166px;top:128px;" width="24" height="24" viewBox="0 0 24 24"><path d="M3,3 L21,21 M21,3 L3,21" stroke="#fff" stroke-width="1.8"/></svg>
<div style="left:2706px;top:240px;width:64px;height:64px;background:#e8f5f5;border-radius:50%"></div>
<div class="t" style="left:2787.00px;top:241.99px;font-size:26px;line-height:26px;color:#4a4f57;letter-spacing:-0.100px;">Call Day 1</div>
<div class="t" style="left:2787.00px;top:273.38px;font-size:22px;line-height:22px;color:#4a4f57;letter-spacing:0.480px;">Step 2</div>
<div style="left:3156px;top:258px;width:44px;height:44px;background:#d8614f;border-radius:50%"></div>
<svg style="left:3166px;top:268px;" width="24" height="24" viewBox="0 0 24 24"><path d="M3,3 L21,21 M21,3 L3,21" stroke="#fff" stroke-width="1.8"/></svg>
<div style="left:2706px;top:380px;width:64px;height:64px;background:#fbeeee;border-radius:50%"></div>
<div class="t" style="left:2787.00px;top:381.99px;font-size:26px;line-height:26px;color:#4a4f57;letter-spacing:0.340px;">Other Step Day 1</div>
<div class="t" style="left:2787.00px;top:413.38px;font-size:22px;line-height:22px;color:#4a4f57;letter-spacing:0.480px;">Step 3</div>
<div style="left:3156px;top:398px;width:44px;height:44px;background:#d8614f;border-radius:50%"></div>
<svg style="left:3166px;top:408px;" width="24" height="24" viewBox="0 0 24 24"><path d="M3,3 L21,21 M21,3 L3,21" stroke="#fff" stroke-width="1.8"/></svg>
<div style="left:2706px;top:520px;width:64px;height:64px;background:#f0f1f3;border-radius:50%"></div>
<div class="t" style="left:2787.00px;top:521.99px;font-size:26px;line-height:26px;color:#4a4f57;letter-spacing:0.222px;">LI In Mail</div>
<div class="t" style="left:2787.00px;top:553.38px;font-size:22px;line-height:22px;color:#4a4f57;letter-spacing:0.480px;">Step 4</div>
<div style="left:3156px;top:538px;width:44px;height:44px;background:#d8614f;border-radius:50%"></div>
<svg style="left:3166px;top:548px;" width="24" height="24" viewBox="0 0 24 24"><path d="M3,3 L21,21 M21,3 L3,21" stroke="#fff" stroke-width="1.8"/></svg>
<svg style="left:2723.5px;top:121.5px;" width="29" height="23" viewBox="0 0 29 23"><rect x="0.5" y="0.5" width="28" height="22" rx="3" fill="#5257d3"/><path d="M1,4 L14.5,13 L28,4" fill="none" stroke="#fff" stroke-width="2"/></svg>
<svg style="left:2725px;top:258px;" width="26" height="26" viewBox="0 0 26 26"><path d="M5,3 C3,4 2,6 3,9 C5,15 10,20 17,23 C20,24 22,23 23,21 L20,17 C19,16.5 18,17 17,18 C13,16 10,13 8,9 C9,8 10,7 9.5,6 Z" fill="#4fb7b0"/></svg>
<svg style="left:2725.5px;top:397.5px;" width="25" height="29" viewBox="0 0 25 29"><path d="M1,2 C1,1 1.5,0.5 2.5,0.5 L16,0.5 L24,8.5 L24,27 C24,28 23.5,28.5 22.5,28.5 L2.5,28.5 C1.5,28.5 1,28 1,27 Z" fill="#e07b72"/><path d="M16,0.5 L16,8.5 L24,8.5" fill="#fbeeee"/><g fill="#fff"><rect x="6" y="13" width="13" height="2"/><rect x="6" y="17.5" width="13" height="2"/><rect x="6" y="22" width="13" height="2"/></g></svg>
<svg style="left:2723px;top:537.5px;" width="29" height="29" viewBox="0 0 29 29"><rect x="0" y="0" width="29" height="29" rx="5" fill="#fff"/><circle cx="14.5" cy="14.5" r="12" fill="#2e6eb9"/><path d="M21,8 L16.5,16.5 L8,21 L12.5,12.5 Z" fill="#fff"/><circle cx="14.5" cy="14.5" r="2" fill="#2e6eb9"/></svg>
<div style="left:-2px;top:1852px;width:225.5px;height:44px;background:#5a92de;border:1px solid #2a2a2a;border-radius:0 7px 0 0"></div>
<div class="t" style="left:7.10px;top:1861.53px;font-size:23px;line-height:23px;color:#1d1d24;letter-spacing:1.150px;">javascript:void(0);</div>
</body></html>
